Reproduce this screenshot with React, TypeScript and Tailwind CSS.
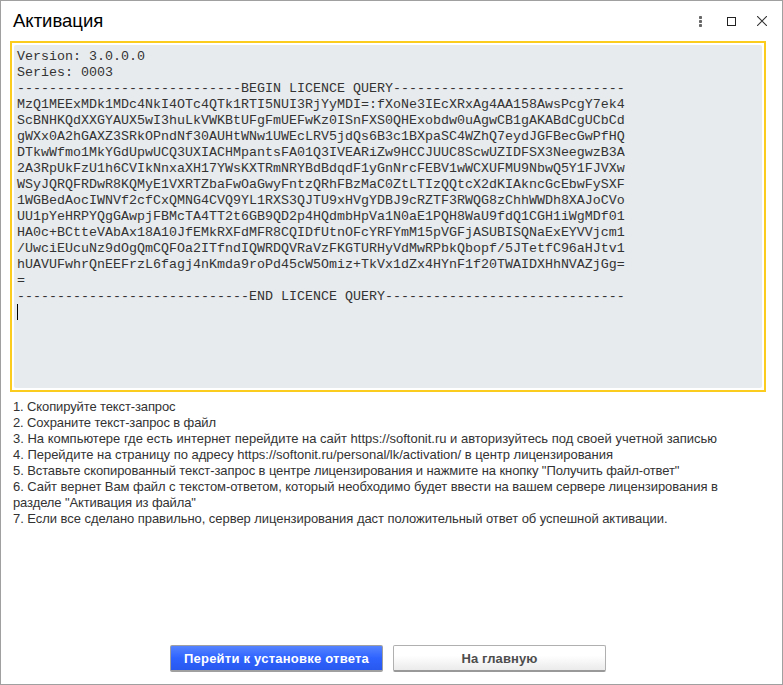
const query = [
  'Version: 3.0.0.0',
  'Series: 0003',
  '-'.repeat(28) + 'BEGIN LICENCE QUERY' + '-'.repeat(29),
  'MzQ1MEExMDk1MDc4NkI4OTc4QTk1RTI5NUI3RjYyMDI=:fXoNe3IEcXRxAg4AA158AwsPcgY7ek4',
  'ScBNHKQdXXGYAUX5wI3huLkVWKBtUFgFmUEFwKz0ISnFXS0QHExobdw0uAgwCB1gAKABdCgUCbCd',
  'gWXx0A2hGAXZ3SRkOPndNf30AUHtWNw1UWEcLRV5jdQs6B3c1BXpaSC4WZhQ7eydJGFBecGwPfHQ',
  'DTkwWfmo1MkYGdUpwUCQ3UXIACHMpantsFA01Q3IVEARiZw9HCCJUUC8ScwUZIDFSX3NeegwzB3A',
  '2A3RpUkFzU1h6CVIkNnxaXH17YWsKXTRmNRYBdBdqdF1yGnNrcFEBV1wWCXUFMU9NbwQ5Y1FJVXw',
  'WSyJQRQFRDwR8KQMyE1VXRTZbaFwOaGwyFntzQRhFBzMaC0ZtLTIzQQtcX2dKIAkncGcEbwFySXF',
  '1WGBedAocIWNVf2cfCxQMNG4CVQ9YL1RXS3QJTU9xHVgYDBJ9cRZTF3RWQG8zChhWWDh8XAJoCVo',
  'UU1pYeHRPYQgGAwpjFBMcTA4TT2t6GB9QD2p4HQdmbHpVa1N0aE1PQH8WaU9fdQ1CGH1iWgMDf01',
  'HA0c+BCtteVAbAx18A10JfEMkRXFdMFR8CQIDfUtnOFcYRFYmM15pVGFjASUBISQNaExEYVVjcm1',
  '/UwciEUcuNz9dOgQmCQFOa2ITfndIQWRDQVRaVzFKGTURHyVdMwRPbkQbopf/5JTetfC96aHJtv1',
  'hUAVUFwhrQnEEFrzL6fagj4nKmda9roPd45cW5Omiz+TkVx1dZx4HYnF1f20TWAIDXHhNVAZjGg=',
  '=',
  '-'.repeat(29) + 'END LICENCE QUERY' + '-'.repeat(30),
];

const steps = [
  { text: '1. Скопируйте текст-запрос', tracking: 'tracking-[-0.12px]' },
  { text: '2. Сохраните текст-запрос в файл', tracking: 'tracking-[-0.12px]' },
  {
    text: '3. На компьютере где есть интернет перейдите на сайт https://softonit.ru и авторизуйтесь под своей учетной записью',
    tracking: 'tracking-[-0.009px]',
  },
  {
    text: '4. Перейдите на страницу по адресу https://softonit.ru/personal/lk/activation/ в центр лицензирования',
    tracking: 'tracking-[-0.02px]',
  },
  {
    text: '5. Вставьте скопированный текст-запрос в центре лицензирования и нажмите на кнопку "Получить файл-ответ"',
    tracking: 'tracking-[-0.096px]',
  },
  {
    text: '6. Сайт вернет Вам файл с текстом-ответом, который необходимо будет ввести на вашем сервере лицензирования в',
    tracking: 'tracking-[-0.065px]',
  },
  { text: 'разделе "Активация из файла"', tracking: 'tracking-[-0.11px]' },
  {
    text: '7. Если все сделано правильно, сервер лицензирования даст положительный ответ об успешной активации.',
    tracking: 'tracking-[-0.05px]',
  },
];

function TitleBar() {
  return (
    <header className="flex h-10 shrink-0 items-center justify-between pl-3 pr-[15px]">
      <h1 className="text-[18.5px] leading-10 text-black">Активация</h1>
      <div className="flex h-10 items-center">
        <svg width="5" height="12" viewBox="0 0 5 12" className="mr-[24px]" fill="#666">
          <rect x="1" y="1" width="3" height="3" rx=".8" />
          <rect x="1" y="5" width="3" height="3" rx=".8" />
          <rect x="1" y="9" width="3" height="3" rx=".8" />
        </svg>
        <svg width="9" height="10" viewBox="0 0 9 10" className="mr-[21px]" fill="none" stroke="#222">
          <rect x=".5" y="1.5" width="8" height="8" />
        </svg>
        <svg width="10" height="10" viewBox="0 0 10 10" fill="none" stroke="#333" strokeWidth="1.1">
          <path d="M0 0L10 10M10 0L0 10" />
        </svg>
      </div>
    </header>
  );
}

export default function App() {
  return (
    <main className="flex h-[685px] w-[783px] flex-col overflow-hidden border border-[#a0a0a0] bg-white font-['Liberation_Sans',Arial,sans-serif]">
      <TitleBar />
      <section className="ml-[9px] h-[351px] w-[756px] shrink-0 border-2 border-[#fbcb1e] p-0.5">
        <div className="h-full rounded-[2px] bg-[#e7ebee] pl-[3px] pt-1 font-['Liberation_Mono',monospace] text-[13.333px] leading-4 text-[#333]">
          {query.map((line, i) => (
            <div key={i} className="h-4 whitespace-pre">{line}</div>
          ))}
          <div className="-mt-px h-4 w-px bg-black" />
        </div>
      </section>
      <section className="ml-3 mt-[7px] text-[13px] leading-4 text-[#333]">
        {steps.map(({ text, tracking }) => (
          <p key={text} className={`whitespace-pre ${tracking}`}>{text}</p>
        ))}
      </section>
      <footer className="mb-[12px] mt-auto flex gap-[10px] pl-[169px]">
        <button className="h-[27px] w-[213px] rounded-[2px] border border-b-2 border-[#a0a0a0] bg-linear-to-b from-[#5583ff] via-[#2f63ff] to-[#2858ee] pt-[2px] text-[13px] font-bold tracking-[0.23px] text-white">
          Перейти к установке ответа
        </button>
        <button className="h-[27px] w-[213px] rounded-[2px] border border-b-2 border-[#b0b0b0] border-b-[#999] bg-linear-to-b from-white from-40% to-[#ebebeb] pt-[2px] text-[13px] font-bold tracking-[0.1px] text-[#4d4d4d]">
          На главную
        </button>
      </footer>
    </main>
  );
}
